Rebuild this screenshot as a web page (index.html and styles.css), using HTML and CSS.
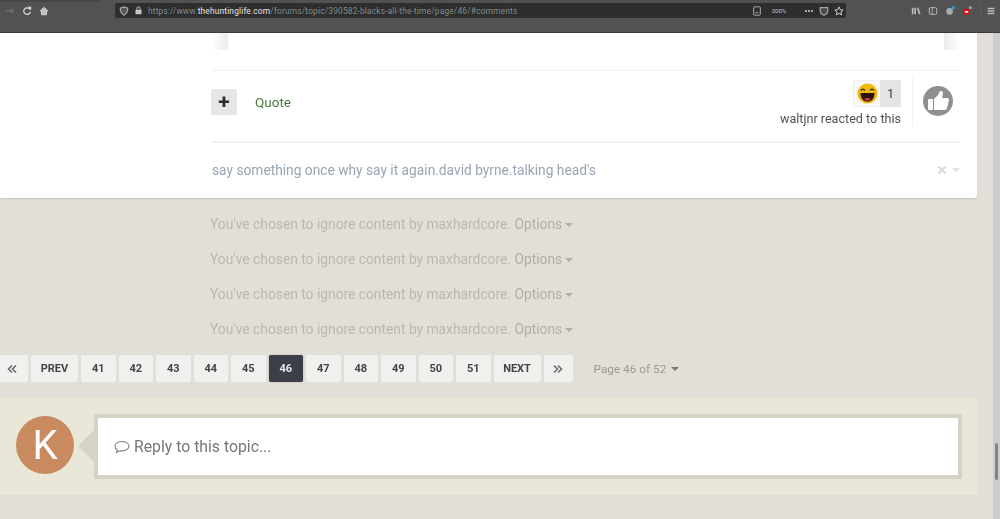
FILE: index.html
```html
<!DOCTYPE html>
<html lang="en">
<head>
<meta charset="utf-8">
<title>Blacks all the time - The Hunting Life</title>
<link rel="stylesheet" href="styles.css">
</head>
<body>
<div class="window">
  <header class="toolbar">
    <div class="nav-icons">
      <svg class="ico dim" viewBox="0 0 12 12"><path d="M1 6h9M7 3l3 3-3 3" fill="none" stroke="#7c7c7c" stroke-width="1.200"/></svg>
      <svg class="ico" viewBox="0 0 12 12"><path d="M9.500 4A4 4 0 1 0 10 7" fill="none" stroke="#ddd" stroke-width="1.500"/><path d="M7 1l4 0 0 4z" fill="#ddd"/></svg>
      <svg class="ico" viewBox="0 0 12 12"><path d="M6 1.500L1.500 6h1.500v4.500h6V6h1.500z" fill="#bdbdbd" stroke="#ddd" stroke-width="1"/></svg>
    </div>
    <div class="urlbar">
      <svg class="ico" viewBox="0 0 12 12"><path d="M6 1l4.500 1.500c0 4-1.500 7-4.500 8.500C3 9.500 1.500 6.500 1.500 2.500z" fill="#555" stroke="#a8a8a8" stroke-width="1.400"/></svg>
      <svg class="ico small" viewBox="0 0 12 12"><rect x="2" y="5" width="8" height="6" fill="#c8c8c8"/><path d="M4 5V3a2 2 0 0 1 4 0v2" fill="none" stroke="#c8c8c8" stroke-width="1.300"/></svg>
      <span class="url"><span class="url-dim">https://www.</span><span class="url-host">thehuntinglife.com</span><span class="url-dim">/forums/topic/390582-blacks-all-the-time/page/46/#comments</span></span>
      <span class="url-tools">
        <svg class="ico" viewBox="0 0 12 12"><rect x="2" y="1" width="8" height="10" rx="1" fill="none" stroke="#aaa" stroke-width="1.200"/><path d="M4 8h4" stroke="#aaa"/></svg>
        <span class="zoom">200%</span>
        <span class="dots"></span>
        <svg class="ico" viewBox="0 0 12 12"><path d="M1.500 2h9v4C10.500 9 8 10.500 6 11 4 10.500 1.500 9 1.500 6z" fill="#4a4a4a" stroke="#a8a8a8" stroke-width="1.400"/></svg>
        <svg class="ico" viewBox="0 0 12 12"><path d="M6 1l1.500 3.500 3.500.3-2.700 2.300.9 3.600L6 8.800 2.800 10.700l.9-3.600L1 4.800l3.500-.3z" fill="none" stroke="#ccc" stroke-width="1.200"/></svg>
      </span>
    </div>
    <div class="ext-icons">
      <svg class="ico" viewBox="0 0 12 12"><path d="M2 2v8M5 2v8M8 2l2.500 8" stroke="#bbb" stroke-width="2" fill="none"/></svg>
      <svg class="ico" viewBox="0 0 12 12"><rect x="1.500" y="2" width="9" height="8" rx="1.500" fill="none" stroke="#bbb" stroke-width="1.200"/><path d="M5 2v8" stroke="#bbb"/></svg>
      <svg class="ico" viewBox="0 0 12 12"><circle cx="5.500" cy="6.500" r="4" fill="#aaa"/><circle cx="10" cy="2" r="2" fill="#2a9fd8"/></svg>
      <svg class="ico" viewBox="0 0 12 12"><circle cx="5.500" cy="7" r="4" fill="#c8141e"/><rect x="3.500" y="6" width="4" height="2" fill="#eee"/><circle cx="10" cy="2" r="2" fill="#999"/></svg>
      <span class="sep"></span>
      <svg class="ico" viewBox="0 0 12 12"><path d="M2 3h8M2 6h8M2 9h8" stroke="#bbb" stroke-width="1.600"/></svg>
    </div>
  </header>

  <div class="viewport">
    <main class="page">
      <article class="card">
        <div class="quote-tail"><span class="fade left"></span><span class="fade right"></span></div>
        <div class="actions">
          <div class="actions-left">
            <span class="plus">+</span>
            <a class="quote-link">Quote</a>
          </div>
          <div class="actions-right">
            <div class="reactions">
              <div class="reaction-badge">
                <span class="emoji">
                  <svg viewBox="0 0 24 24"><circle cx="12" cy="12" r="11.500" fill="#f2b70f"/><path d="M4.500 8.500q2.500-3 4.500 0M15 8.500q2-3 4.500 0" fill="none" stroke="#222" stroke-width="1.600"/><path d="M4 11.500h16C20 18 16.500 21.500 12 21.500S4 18 4 11.500z" fill="#2a1408"/><path d="M8 18.500q4-3 8 0-4 3.500-8 0z" fill="#d8324a"/></svg>
                </span>
                <span class="count">1</span>
              </div>
              <div class="reacted">waltjnr reacted to this</div>
            </div>
            <div class="like">
              <svg viewBox="0 0 30 30"><circle cx="15" cy="15" r="15" fill="#8f8f8f"/><rect x="5" y="13" width="5" height="11" rx="1" fill="#fff"/><path d="M11 13l4-4c1-1 1-4 3-4s2.500 2.500 1.500 5l-.5 2h5c1.500 0 2 1 2 2l-2 8c-.3 1-1 2-2 2H11z" fill="#fff"/></svg>
            </div>
          </div>
        </div>
        <div class="signature">
          <span>say something once why say it again.david byrne.talking head's</span>
          <span class="sig-tools">
            <svg class="x" viewBox="0 0 10 10"><path d="M1.500 1.500l7 7M8.500 1.500l-7 7" stroke="#d9dde2" stroke-width="2.400"/></svg>
            <span class="caret light"></span>
          </span>
        </div>
      </article>

      <section class="ignored">
        <div class="ignored-row">You've chosen to ignore content by maxhardcore. <span class="opts">Options <span class="caret"></span></span></div>
        <div class="ignored-row">You've chosen to ignore content by maxhardcore. <span class="opts">Options <span class="caret"></span></span></div>
        <div class="ignored-row">You've chosen to ignore content by maxhardcore. <span class="opts">Options <span class="caret"></span></span></div>
        <div class="ignored-row">You've chosen to ignore content by maxhardcore. <span class="opts">Options <span class="caret"></span></span></div>
      </section>

      <nav class="pager">
        <a class="pg pg-arrow first"><svg class="chev" viewBox="0 0 10 10"><path d="M5 1.500L1.500 5 5 8.500M9 1.500L5.500 5 9 8.500" fill="none" stroke="#666" stroke-width="1.500"/></svg></a>
        <a class="pg pg-word">PREV</a>
        <a class="pg">41</a>
        <a class="pg">42</a>
        <a class="pg">43</a>
        <a class="pg">44</a>
        <a class="pg">45</a>
        <a class="pg active">46</a>
        <a class="pg">47</a>
        <a class="pg">48</a>
        <a class="pg">49</a>
        <a class="pg">50</a>
        <a class="pg">51</a>
        <a class="pg pg-word">NEXT</a>
        <a class="pg pg-arrow"><svg class="chev" viewBox="0 0 10 10"><path d="M1 1.500L4.500 5 1 8.500M5 1.500L8.500 5 5 8.500" fill="none" stroke="#666" stroke-width="1.500"/></svg></a>
        <span class="pg-jump">Page 46 of 52 <span class="caret"></span></span>
      </nav>

      <section class="reply">
        <div class="avatar">K</div>
        <div class="reply-box">
          <svg class="bubble" viewBox="0 0 16 14"><path d="M8 1.500c3.800 0 7 2 7 4.700s-3.200 4.700-7 4.700c-.8 0-1.500-.1-2.200-.2L2.500 12.500l.8-2.700C1.800 9 1 7.700 1 6.200 1 3.500 4.200 1.500 8 1.500z" fill="none" stroke="#7d8086" stroke-width="1.100"/></svg>
          <span>Reply to this topic...</span>
        </div>
      </section>
    </main>
    <aside class="scrollbar"><span class="thumb"></span></aside>
  </div>
</div>
</body>
</html>
```

FILE: styles.css
```css
* { box-sizing: border-box; }
html, body { margin: 0; height: 100%; overflow: hidden; }
body { font-family: Roboto, "Liberation Sans", sans-serif; background: #e2dfd8; }

.window { height: 519px; display: flex; flex-direction: column; filter: blur(0.7px); }

.toolbar {
  height: 33px; flex: none; border-bottom: 1px solid #3a3a3a;
  background: linear-gradient(#464646, #464646) 0 0 / 100px 2px no-repeat, #525252;
  display: flex; align-items: flex-start; padding-top: 3px;
}
.ico { width: 10px; height: 10px; display: block; flex: none; }
.ico.small { width: 9px; height: 9px; }
.nav-icons { width: 115px; height: 15px; display: flex; align-items: center; gap: 7px; padding: 1px 0 0 5px; flex: none; }
.urlbar {
  width: 731px; height: 15px; background: #2e2e2e; border-radius: 2px; flex: none;
  display: flex; align-items: center; gap: 5px; padding: 0 2px 0 4px;
}
.url { font-size: 8.400px; letter-spacing: 0.16px; white-space: nowrap; }
.url-dim { color: #7d8c8c; }
.url-host { color: #e4e4e4; }
.url-tools { margin-left: auto; display: flex; align-items: center; gap: 5px; }
.zoom { font-size: 6px; color: #c4c4c4; width: 30px; text-align: center; margin-right: 3px; padding-right: 6px; }
.dots { width: 8px; height: 2px; background: repeating-linear-gradient(90deg, #aaa 0 2px, transparent 2px 3px); margin-right: 1px; }
.ext-icons { flex: 1; height: 15px; display: flex; align-items: center; gap: 7px; padding-left: 65px; }
.sep { width: 1px; height: 14px; background: #5e5e5e; margin: 0 -2px 0 1px; }

.viewport { flex: 1; display: flex; min-height: 0; }
.page { width: 993px; flex: none; }
.scrollbar { flex: 1; background: #cdcdcd; padding: 410px 2px 0; }
.thumb { display: block; height: 37px; background: #808582; border-radius: 2px; }

.card {
  width: 977px; height: 165px; background: #fff; padding: 0 17px 0 212px;
  box-shadow: 0 1px 2px rgba(0,0,0,.12); border-radius: 0 0 3px 0;
}
.quote-tail { height: 38px; display: flex; justify-content: space-between; border-bottom: 1px solid #f1f1f1; }
.fade { width: 16px; height: 17px; }
.fade.left { background: linear-gradient(90deg, #fff, #ececec); }
.fade.right { background: linear-gradient(90deg, #ececec, #fff); }
.actions {
  height: 72px; display: flex; justify-content: space-between; align-items: center;
  border-bottom: 2px solid #f1f1f1; padding-bottom: 8px;
}
.actions-left { display: flex; align-items: center; gap: 18px; margin-left: -1px; }
.plus {
  width: 26px; height: 26px; background: #e6e6e6; border-radius: 2px; display: flex;
  align-items: center; justify-content: center; font-size: 21px; font-weight: 700; color: #2e2e2e;
}
.quote-link { color: #47793f; font-size: 13.500px; }
.actions-right { display: flex; align-items: stretch; height: 50px; }
.reactions { display: flex; flex-direction: column; align-items: flex-end; padding: 3px 11px 0 0; border-right: 1px solid #f2f2f2; }
.reaction-badge { display: flex; height: 27px; }
.emoji { width: 27px; background: #f8f8f8; border: 1px solid #f0f0f0; border-right: 0; display: flex; align-items: center; justify-content: center; }
.emoji svg { width: 21px; height: 21px; display: block; }
.count { width: 21px; background: #e4e4e4; color: #333; font-size: 12px; display: flex; align-items: center; justify-content: center; }
.reacted { color: #4f5358; font-size: 12.600px; margin-top: 4px; line-height: 15px; white-space: nowrap; }
.like { width: 47px; display: flex; justify-content: flex-end; padding: 9px 7px 0 0; }
.like svg { width: 30px; height: 30px; display: block; }

.signature {
  height: 54px; display: flex; justify-content: space-between; align-items: center;
  color: #98a4b3; font-size: 13.750px;
}
.sig-tools { display: flex; align-items: center; gap: 4px; }
.x { width: 10px; height: 10px; display: block; }

.caret { display: inline-block; width: 0; height: 0; border: 4px solid transparent; border-top: 4px solid currentColor; border-bottom: 0; vertical-align: 2px; margin-left: 1px; }
.caret.light { color: #dfe2e6; }

.ignored { padding: 9px 0 0 210px; }
.ignored-row { height: 35px; line-height: 35px; font-size: 13.800px; color: #b9b8b2; white-space: nowrap; }
.opts { color: #b0afa9; }
.opts .caret { margin-left: -1px; }

.pager { height: 27px; margin-top: 8px; display: flex; align-items: stretch; gap: 3px; margin-left: -5px; }
.pg {
  width: 34.500px; background: #f0f0ef; color: #444; border-radius: 2px; font-size: 11px; font-weight: 700;
  display: flex; align-items: center; justify-content: center;
}
.pg-word { width: 47px; }
.pg-arrow { width: 29px; }
.pg-arrow.first { width: 33px; }
.chev { width: 10px; height: 10px; display: block; }
.active { background: #3d3f48; color: #e8e8e8; box-shadow: 0 0 1px rgba(0,0,0,.5); }
.pg-jump { color: #9b9a95; font-size: 11.800px; margin-left: 18px; align-self: center; white-space: nowrap; }
.pg-jump .caret { color: #77766f; margin-left: 2px; }

.reply {
  width: 977px; height: 97px; margin-top: 16px; background: #e9e7d8;
  padding: 18px 15px 0 16px; display: flex; align-items: flex-start; gap: 20px;
}
.avatar {
  width: 58px; height: 58px; border-radius: 50%; background: #c98a60; color: #fff; flex: none;
  font-size: 40px; font-weight: 400; display: flex; align-items: center; justify-content: center;
}
.reply-box {
  flex: 1; height: 65px; margin-top: -2px; background: #fff; border: 4px solid #d5d3c3;
  display: flex; align-items: center; gap: 4px; padding-left: 16px; color: #74777d; font-size: 15.800px;
  position: relative;
}
.reply-box::before {
  content: ""; position: absolute; left: -20px; top: 12px; width: 0; height: 0;
  border: 16px solid transparent; border-right: 16px solid #d5d3c3; border-left: 0;
}
.bubble { width: 16px; height: 14px; display: block; }
```
